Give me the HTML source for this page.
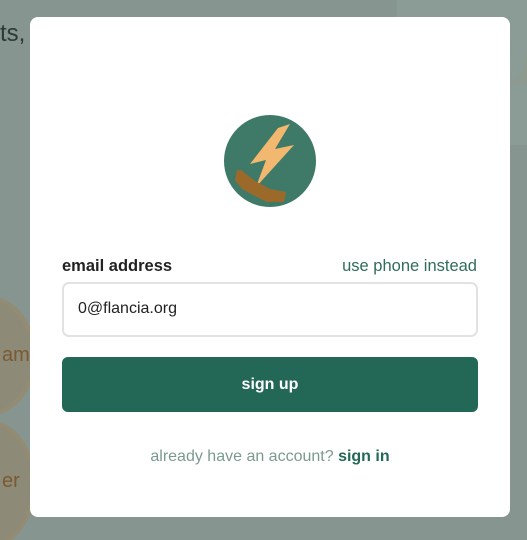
<!DOCTYPE html>
<html><head><meta charset="utf-8"><style>
html,body{margin:0;padding:0;width:527px;height:540px;overflow:hidden;background:#869590;font-family:"Liberation Sans",sans-serif;position:relative}
.bg1{position:absolute;left:0;top:20px;font-size:24px;color:#2b3a35}
.circ{position:absolute;border-radius:50%;background:#8d8a78;border:4px solid #948b73;color:#7a5a32;font-size:20px}
.rt{position:absolute;left:397px;top:0;width:130px;height:145px;background:#8b9b95}
.card{position:absolute;left:30px;top:17px;width:480px;height:500px;background:#fff;border-radius:8px}
.lbl{position:absolute;left:32px;top:240px;font-size:16.5px;font-weight:bold;color:#222}
.alt{position:absolute;right:33px;top:240px;font-size:16.5px;color:#2f6d5b}
.inp{position:absolute;left:32px;top:265px;width:412px;height:51px;border:2px solid #e2e2e2;border-radius:7px;box-sizing:content-box}
.inp span{position:absolute;left:14px;top:16px;font-size:16px;color:#222}
.btn{position:absolute;left:32px;top:340px;width:416px;height:55px;background:#236756;border-radius:6px;color:#fff;font-weight:bold;font-size:16px;text-align:center;line-height:55px}
.foot{position:absolute;left:0;width:480px;top:431px;text-align:center;font-size:16px;color:#7a9a90}
.foot b{color:#236756}
</style></head><body>
<div class="rt"><span style="position:absolute;left:100px;top:20px;font-size:70px;font-style:italic;color:#8f9a8e">u</span></div>
<div class="bg1">ts,</div>
<div class="circ" style="left:-60px;top:296px;width:88px;height:112px"><span style="position:absolute;left:58px;top:44px">am</span></div>
<div class="circ" style="left:-60px;top:420px;width:88px;height:120px"><span style="position:absolute;left:58px;top:46px">er</span></div>
<div class="card">
<svg style="position:absolute;left:194px;top:98px" width="92" height="92" viewBox="0 0 92 92">
<circle cx="46" cy="46" r="46" fill="#3f7a68"/>
<path d="M66 9 L54 13 L26 49 L42 45 L32 72 L70 30 L51 34 Z" fill="#f3b86f"/>
<path d="M13 55 L11 65 L18 74 L31 81 L43 87 L60 87 L62 77 L46 74 L31 66 L17 55 Z" fill="#9b6a2a"/>
</svg>
<div class="lbl">email address</div>
<div class="alt">use phone instead</div>
<div class="inp"><span>0@flancia.org</span></div>
<div class="btn">sign up</div>
<div class="foot">already have an account? <b>sign in</b></div>
</div>
</body></html>
